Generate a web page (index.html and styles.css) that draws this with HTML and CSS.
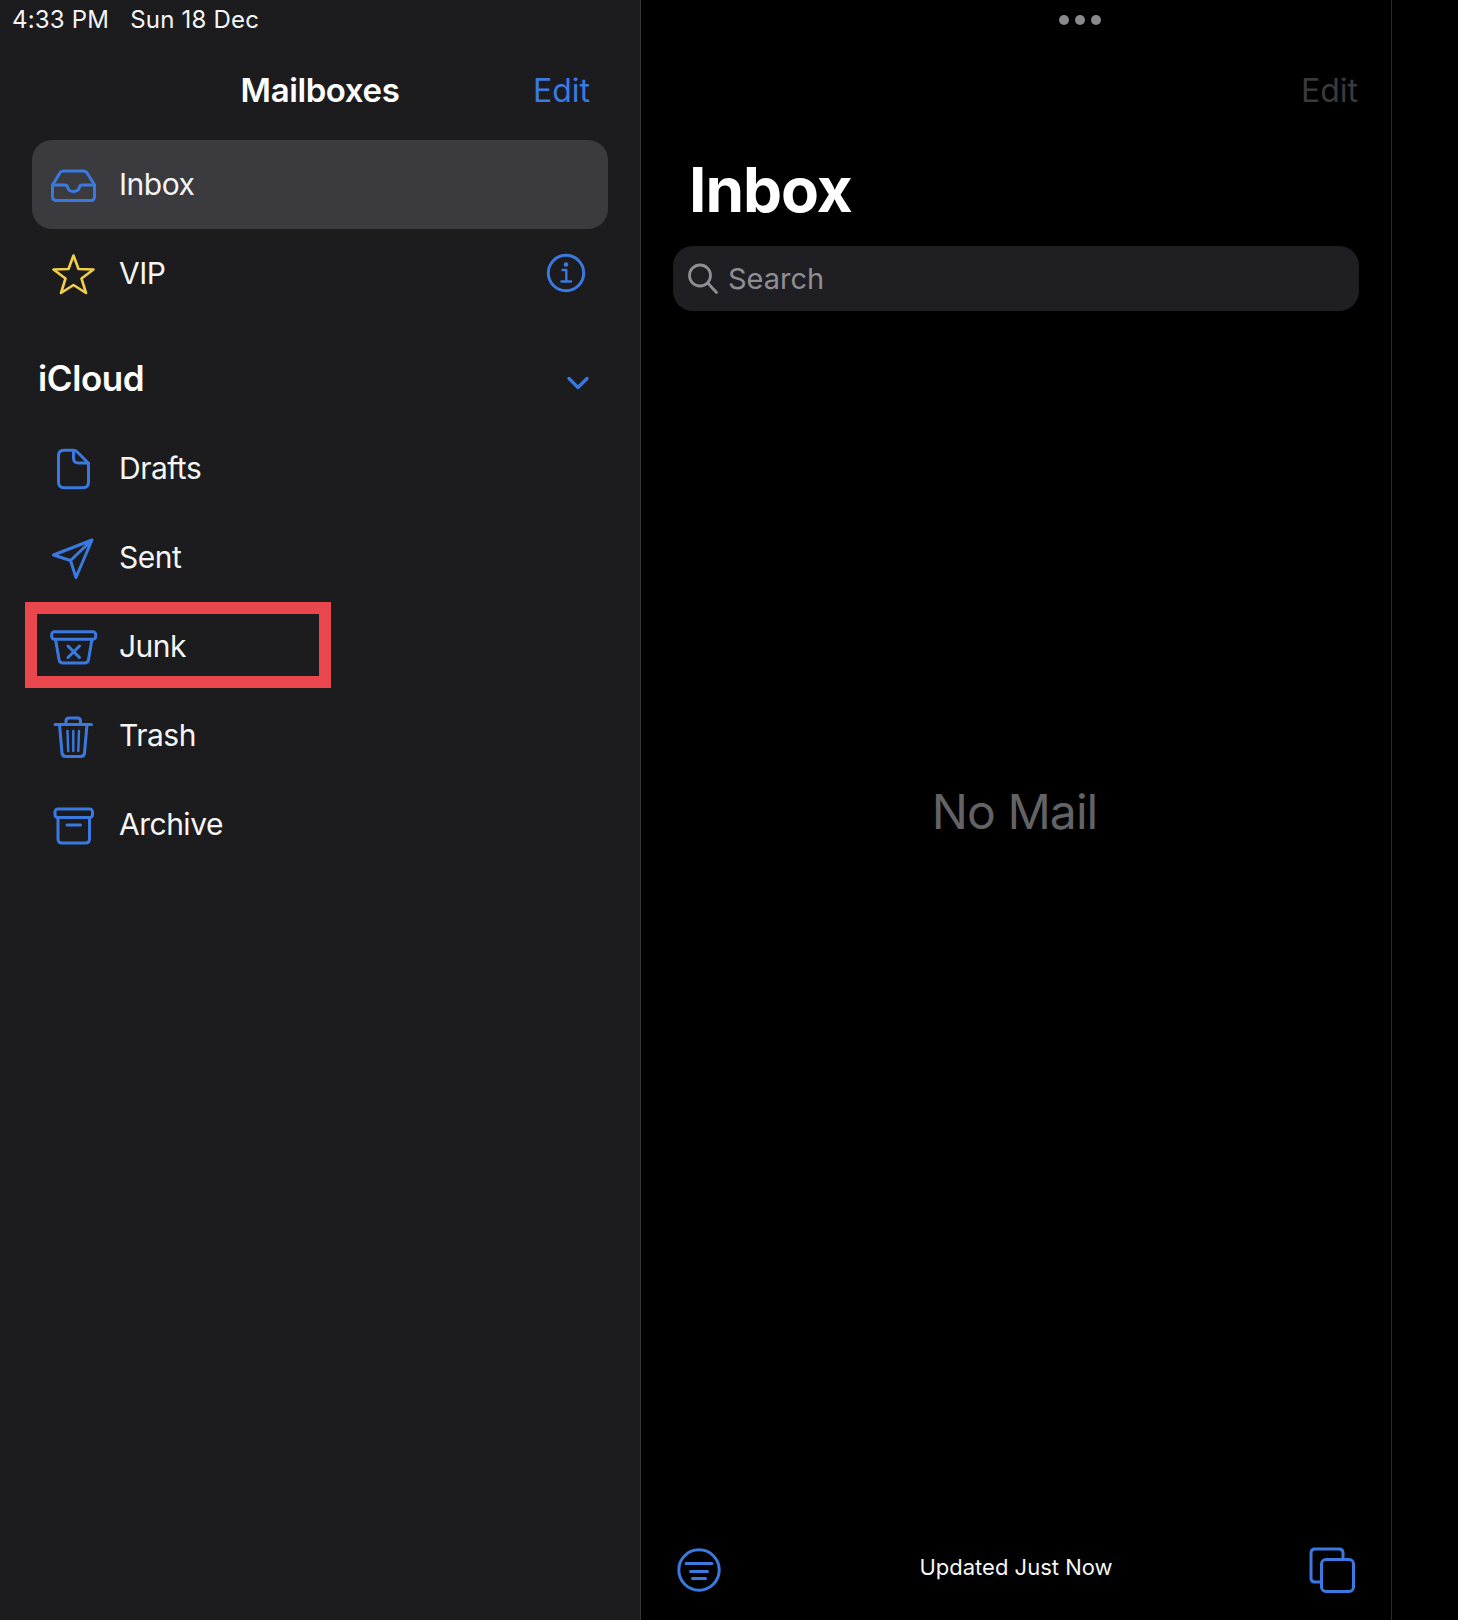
FILE: index.html
```html
<!DOCTYPE html>
<html lang="en">
<head>
<meta charset="utf-8">
<title>Mail</title>
<link rel="stylesheet" href="styles.css">
</head>
<body>
<div class="screen">
  <aside class="sidebar">
    <div class="status">4:33 PM<span class="status-date">Sun 18 Dec</span></div>
    <header class="nav">
      <span></span>
      <h2 class="nav-title">Mailboxes</h2>
      <span class="link edit">Edit</span>
    </header>
    <ul class="list">
      <li class="row selected">
        <svg class="icon" viewBox="0 0 50 50"><path d="M3.500 25 11 12.800Q12 11 14.500 11H34.500Q37 11 38 12.800L45.500 25V36.500Q45.500 40.500 41.500 40.500H7.500Q3.500 40.500 3.500 36.500Z"/><path d="M3.500 25H16Q18 25 18.500 27Q19.500 31.500 24.500 31.500T30.500 27Q31 25 33 25H45.500"/></svg>
        <span class="label">Inbox</span>
      </li>
      <li class="row">
        <svg class="icon star" viewBox="0 0 50 50"><path d="M24.500 6.500 29.500 20 44.500 20.500 32.500 29.500 37 44 24.500 36 12 44 16.500 29.500 4.500 20.500 19.500 20Z"/></svg>
        <span class="label">VIP</span>
        <svg class="info" viewBox="0 0 40 40"><circle cx="20" cy="20" r="17.700"/><circle class="fill" cx="20" cy="11.500" r="2.300"/><path class="thin" d="M16.500 17H20.300V28.500M15.500 28.500H25"/></svg>
      </li>
    </ul>
    <div class="section">
      <h3 class="section-title">iCloud</h3>
      <svg class="chevron" viewBox="0 0 22 14"><path d="M2 2.500 11 11.500 20 2.500"/></svg>
    </div>
    <ul class="list">
      <li class="row">
        <svg class="icon" viewBox="0 0 50 50"><path d="M15 6.300H24.500Q26.500 6.300 28 7.800L37.800 17.500Q39.500 19 39.500 21.500V38Q39.500 43.700 34 43.700H15Q9.500 43.700 9.500 38V12Q9.500 6.300 15 6.300Z"/><path d="M24.500 6.500V14Q24.500 19 29.500 19H39.500"/></svg>
        <span class="label">Drafts</span>
      </li>
      <li class="row">
        <svg class="icon" viewBox="0 0 50 50"><path d="M43 7 4.500 22 21.500 27.500 27 44.500ZM43 7 21.500 27.500"/></svg>
        <span class="label">Sent</span>
      </li>
      <li class="row">
        <svg class="icon" viewBox="0 0 50 50"><rect x="2.700" y="9.700" width="44" height="7.600" rx="2.800"/><path d="M6.500 17.300 10 37.500Q10.500 41 14 41H35.500Q39 41 39.500 37.500L43 17.300M19 24 30.500 35.500M30.500 24 19 35.500"/></svg>
        <span class="label">Junk</span>
        <div class="highlight"></div>
      </li>
      <li class="row">
        <svg class="icon" viewBox="0 0 50 50"><path d="M6 13.500H42.500M10.500 13.500 13 42Q13.300 45.500 17 45.500H31.500Q35.200 45.500 35.500 42L38 13.500M17 13V10Q17 7 20 7H28.500Q31.500 7 31.500 10V13"/><path class="thin" d="M18.500 20 19.200 40M24.300 20V40M30 20 29.300 40"/></svg>
        <span class="label">Trash</span>
      </li>
      <li class="row">
        <svg class="icon" viewBox="0 0 50 50"><rect x="6" y="9" width="37.500" height="8.500" rx="2.800"/><path d="M9 17.500V39Q9 43 13 43H36.500Q40.500 43 40.500 39V17.500M18 25H31.500"/></svg>
        <span class="label">Archive</span>
      </li>
    </ul>
  </aside>
  <main class="content">
    <div class="topbar"><span class="dot"></span><span class="dot"></span><span class="dot"></span></div>
    <div class="content-nav"><span class="edit-off">Edit</span></div>
    <h1 class="title">Inbox</h1>
    <div class="search">
      <svg class="search-icon" viewBox="0 0 32 32"><circle cx="13" cy="12.500" r="10.500"/><path d="M20.800 20 29.500 29.500"/></svg>
      <span class="search-text">Search</span>
    </div>
    <div class="empty">No Mail</div>
    <footer class="toolbar">
      <svg class="filter" viewBox="0 0 44 44"><circle cx="22" cy="22" r="20.200"/><path d="M9 15.500H35M13.500 23.500H30.500M15.500 30.500H28.500"/></svg>
      <span class="updated">Updated Just Now</span>
      <svg class="copies" viewBox="0 0 46 46"><path d="M11 35H6Q2 35 2 31V6Q2 2 6 2H30Q34 2 34 6V12"/><rect x="12.500" y="12.500" width="32" height="32" rx="4.500"/></svg>
    </footer>
  </main>
  <div class="gutter"></div>
</div>
</body>
</html>
```

FILE: styles.css
```css
* { box-sizing: border-box; }
html, body { margin: 0; height: 100%; background: #000; }
body { font-family: Inter, "Liberation Sans", sans-serif; color: #fff; overflow: hidden; }
ul { list-style: none; margin: 0; padding: 0; }
h1, h2, h3 { margin: 0; }
svg { fill: none; stroke: #3a7ae0; stroke-width: 3; stroke-linecap: round; stroke-linejoin: round; flex: none; display: block; }

.screen { display: flex; height: 1620px; }

.sidebar { width: 641px; flex: none; background: #1c1c1e; border-right: 1px solid #38383a; }
.status { height: 40px; padding-left: 12px; font-size: 24px; line-height: 40px; letter-spacing: 0.2px; color: #f5f5f5; white-space: nowrap; }
.status-date { margin-left: 21px; }
.nav { height: 100px; display: grid; grid-template-columns: 1fr auto 1fr; align-items: center; padding: 0 50px; }
.nav-title { font-size: 33px; font-weight: 600; letter-spacing: -0.4px; }
.link { color: #3a7ae0; }
.edit { justify-self: end; font-size: 32px; }

.list { padding: 0 32px; }
.row { position: relative; height: 89px; display: flex; align-items: center; padding-left: 17px; border-radius: 20px; }
.selected { background: #3a3a3f; }
.icon { width: 50px; height: 50px; }
.label { margin-left: 20px; margin-bottom: 2px; font-size: 30px; letter-spacing: -0.5px; color: #f5f5f5; }
.star { stroke: #f2cf4a; stroke-width: 2.600; }
.info { width: 40px; height: 40px; margin-left: auto; margin-right: 22px; margin-bottom: 2px; }
.fill { fill: #3a7ae0; stroke: none; }
.thin { stroke-width: 2.400; }
.highlight { position: absolute; left: -7px; top: 0; width: 306px; height: 86px; border: 12px solid #e9464d; pointer-events: none; }

.section { height: 106px; display: flex; align-items: center; justify-content: space-between; padding: 14px 50px 0 38px; }
.section-title { font-size: 35px; font-weight: 600; letter-spacing: -0.4px; }
.chevron { width: 22px; height: 14px; margin: 9px 1px 0 0; stroke-width: 3.200; }

.content { width: 751px; flex: none; display: flex; flex-direction: column; background: #000; border-right: 1px solid #2a2a2c; }
.topbar { height: 40px; display: flex; align-items: center; gap: 6px; padding-left: 418px; }
.dot { width: 10px; height: 10px; border-radius: 50%; background: #8a8a8e; }
.content-nav { height: 100px; display: flex; align-items: center; justify-content: flex-end; padding-right: 33px; }
.edit-off { font-size: 32px; color: #3a3a3c; }
.title { height: 106px; padding: 6px 0 0 48px; font-size: 62px; line-height: 88px; font-weight: 700; letter-spacing: -1px; }
.search { height: 65px; flex: none; margin: 0 32px; padding-left: 14px; display: flex; align-items: center; gap: 9px; background: #1f1f23; border-radius: 20px; }
.search-icon { width: 32px; height: 32px; stroke: #8e8e93; stroke-width: 2.800; }
.search-text { font-size: 29px; color: #8e8e93; }
.empty { flex: 1; display: flex; align-items: center; justify-content: center; padding: 0 3px 208px 0; font-size: 48px; letter-spacing: -0.9px; color: #636366; }
.toolbar { height: 100px; flex: none; display: grid; grid-template-columns: 1fr auto 1fr; align-items: center; padding: 0 36px; }
.filter { width: 44px; height: 44px; }
.updated { font-size: 22px; color: #f5f5f5; margin-bottom: 6px; }
.copies { width: 46px; height: 46px; justify-self: end; }
.gutter { flex: 1; background: #000; }
```
